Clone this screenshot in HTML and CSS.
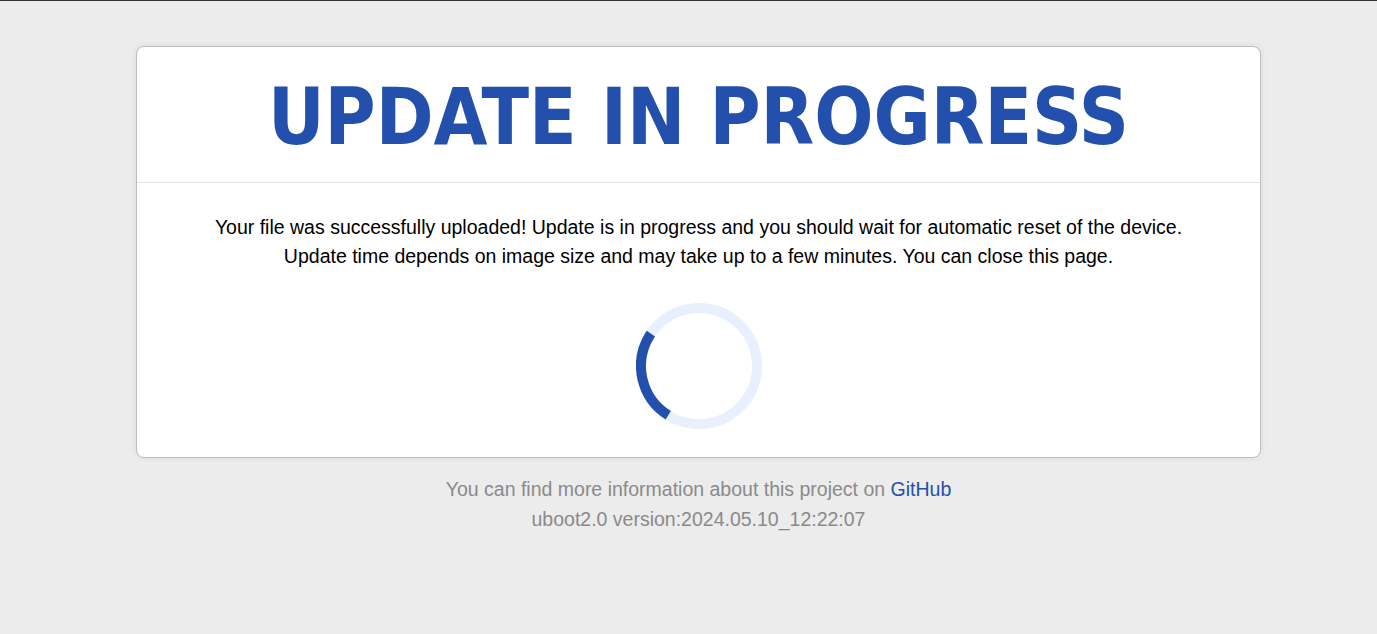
FILE: index.html
```html
<!DOCTYPE html>
<html>
<head>
<meta charset="utf-8">
<title>Update in progress</title>
<link rel="stylesheet" href="styles.css">
</head>
<body>
<div class="page">
  <div class="card">
    <div class="card-header">
      <h1 class="title">UPDATE IN PROGRESS</h1>
    </div>
    <div class="card-body">
      <p class="message">Your file was successfully uploaded! Update is in progress and you should wait for automatic reset of the device.<br>Update time depends on image size and may take up to a few minutes. You can close this page.</p>
      <svg class="spinner" width="126" height="126" viewBox="0 0 126 126">
        <circle class="track" cx="63" cy="63" r="58"></circle>
        <circle class="arc" cx="63" cy="63" r="58" transform="rotate(122 63 63)"></circle>
      </svg>
    </div>
  </div>
  <div class="footer">
    <p class="footer-line">You can find more information about this project on <a class="link" href="#">GitHub</a></p>
    <p class="footer-line">uboot2.0 version:2024.05.10_12:22:07</p>
  </div>
</div>
</body>
</html>
```

FILE: styles.css
```css
html, body {
  margin: 0;
  padding: 0;
}
body {
  background: #ececec;
  border-top: 1px solid #333;
  font-family: "Liberation Sans", Arial, sans-serif;
  min-height: 633px;
}
.page {
  padding: 45px 0 0 20px;
  display: flex;
  flex-direction: column;
  align-items: center;
}
.card {
  width: 1123px;
  background: #fff;
  border: 1px solid #bdbdbd;
  border-radius: 8px;
  box-shadow: 0 0 6px rgba(0,0,0,0.08);
}
.card-header {
  box-sizing: border-box;
  height: 136px;
  padding-top: 6px;
  border-bottom: 1px solid #e4e4e4;
  display: flex;
  align-items: center;
  justify-content: center;
}
.title {
  margin: 0;
  font-family: "DejaVu Sans", Verdana, sans-serif;
  font-stretch: condensed;
  font-weight: bold;
  font-size: 77.5px;
  line-height: 1;
  color: #2350ad;
  letter-spacing: 0;
}
.card-body {
  display: flex;
  flex-direction: column;
  align-items: center;
  padding: 30px 0 28px;
}
.message {
  margin: 0;
  font-size: 19.5px;
  line-height: 29px;
  color: #000;
  text-align: center;
}
.spinner {
  display: block;
  margin-top: 32px;
}
.track {
  fill: none;
  stroke: #e8f0fe;
  stroke-width: 10;
}
.arc {
  fill: none;
  stroke: #2350ad;
  stroke-width: 10;
  stroke-dasharray: 93 400;
}
.footer {
  padding-top: 16px;
  text-align: center;
}
.footer-line {
  margin: 0;
  font-size: 19.5px;
  line-height: 30px;
  color: #8a8a8a;
}
.link {
  color: #2350ad;
  text-decoration: none;
}
```
